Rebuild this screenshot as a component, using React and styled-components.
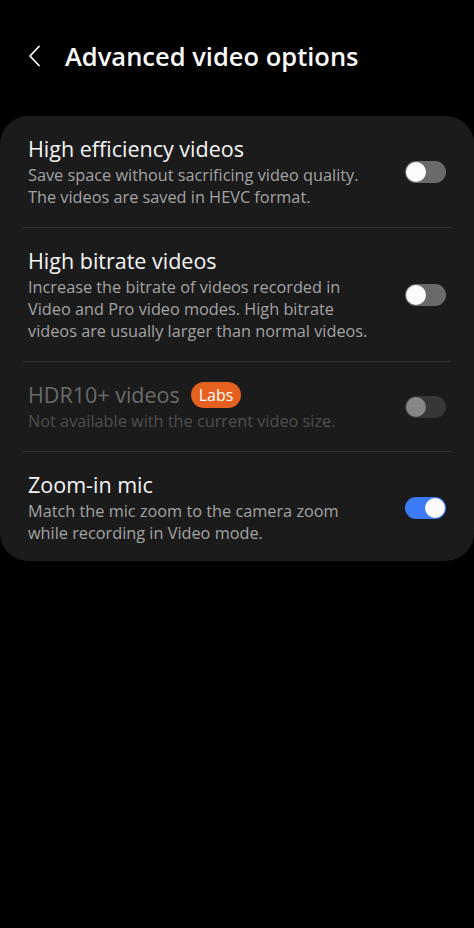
import React from 'react'
import styled, { createGlobalStyle } from 'styled-components'

const GlobalStyle = createGlobalStyle`
  html, body {
    margin: 0;
    padding: 0;
    background: #000;
  }
  body {
    font-family: "Open Sans", Roboto, "Liberation Sans", sans-serif;
    -webkit-font-smoothing: antialiased;
  }
`

// desc is split into lines the way the device wraps them
const options = [
  {
    title: 'High efficiency videos',
    desc: ['Save space without sacrificing video quality.', 'The videos are saved in HEVC format.'],
    on: false,
  },
  {
    title: 'High bitrate videos',
    desc: [
      'Increase the bitrate of videos recorded in',
      'Video and Pro video modes. High bitrate',
      'videos are usually larger than normal videos.',
    ],
    on: false,
  },
  {
    title: 'HDR10+ videos',
    desc: ['Not available with the current video size.'],
    on: false,
    disabled: true,
    badge: 'Labs',
  },
  {
    title: 'Zoom-in mic',
    desc: ['Match the mic zoom to the camera zoom', 'while recording in Video mode.'],
    on: true,
  },
]

export default function App() {
  return (
    <Screen>
      <GlobalStyle />
      <Header>
        <BackButton aria-label="Back">
          <svg width="14" height="22" viewBox="0 0 14 22" fill="none">
            <path d="M11 1.5 L2 11 L11 20.5" stroke="#fff" strokeWidth="1.8" strokeLinecap="round" strokeLinejoin="round" />
          </svg>
        </BackButton>
        <Title>Advanced video options</Title>
      </Header>
      <Card>
        {options.map((o, i) => (
          <Row key={o.title} $last={i === options.length - 1}>
            <Text>
              <RowTitle $disabled={o.disabled}>
                {o.title}
                {o.badge && <Badge>{o.badge}</Badge>}
              </RowTitle>
              <RowDesc $disabled={o.disabled}>
                {o.desc.map(line => (
                  <DescLine key={line}>{line}</DescLine>
                ))}
              </RowDesc>
            </Text>
            <Switch $on={o.on} $disabled={o.disabled}>
              <Thumb $on={o.on} $disabled={o.disabled} />
            </Switch>
          </Row>
        ))}
      </Card>
    </Screen>
  )
}

const Screen = styled.div`
  width: 474px;
  min-height: 928px;
  background: #000;
  color: #fff;
`

const Header = styled.div`
  display: flex;
  align-items: center;
  height: 56px;
  padding: 28px 0 0 28px;
`

const BackButton = styled.div`
  display: flex;
  align-items: center;
  width: 37px;
  height: 24px;
`

const Title = styled.div`
  font-size: 25.5px;
  font-weight: 600;
  letter-spacing: 0;
  color: #fafafa;
`

const Card = styled.div`
  margin-top: 32px;
  background: #1b1b1c;
  border-radius: 28px;
  padding: 0 23px;
`

const Row = styled.div`
  display: flex;
  align-items: center;
  justify-content: space-between;
  padding: 20px 0 ${p => (p.$last ? '17px' : '19px')} 5px;
  border-bottom: ${p => (p.$last ? 'none' : '1.5px solid #313133')};
`

const Text = styled.div`
  display: flex;
  flex-direction: column;
  width: 362px;
`

const RowTitle = styled.div`
  display: flex;
  align-items: center;
  font-size: 21.5px;
  line-height: 26px;
  height: 26px;
  margin-bottom: 2px;
  color: ${p => (p.$disabled ? '#6b6b6b' : '#f5f5f5')};
`

const Badge = styled.span`
  display: inline-flex;
  align-items: center;
  justify-content: center;
  height: 26px;
  padding: 0 8px;
  margin-left: 11px;
  border-radius: 13px;
  background: #e4611f;
  color: #fff;
  font-size: 16px;
`

const RowDesc = styled.div`
  font-size: 16.3px;
  line-height: 22px;
  color: ${p => (p.$disabled ? '#4f4f4f' : '#a3a3a3')};
`

const DescLine = styled.div`
  white-space: nowrap;
`

const Switch = styled.div`
  position: relative;
  flex-shrink: 0;
  width: 41px;
  height: 22px;
  margin-right: 5px;
  border-radius: 11px;
  background: ${p => (p.$disabled ? '#373738' : p.$on ? '#3c7bf5' : '#6a6a6b')};
`

const Thumb = styled.div`
  position: absolute;
  top: 1px;
  left: ${p => (p.$on ? '20px' : '1px')};
  width: 20px;
  height: 20px;
  border-radius: 50%;
  background: ${p => (p.$disabled ? '#868687' : '#fbfbfb')};
`
